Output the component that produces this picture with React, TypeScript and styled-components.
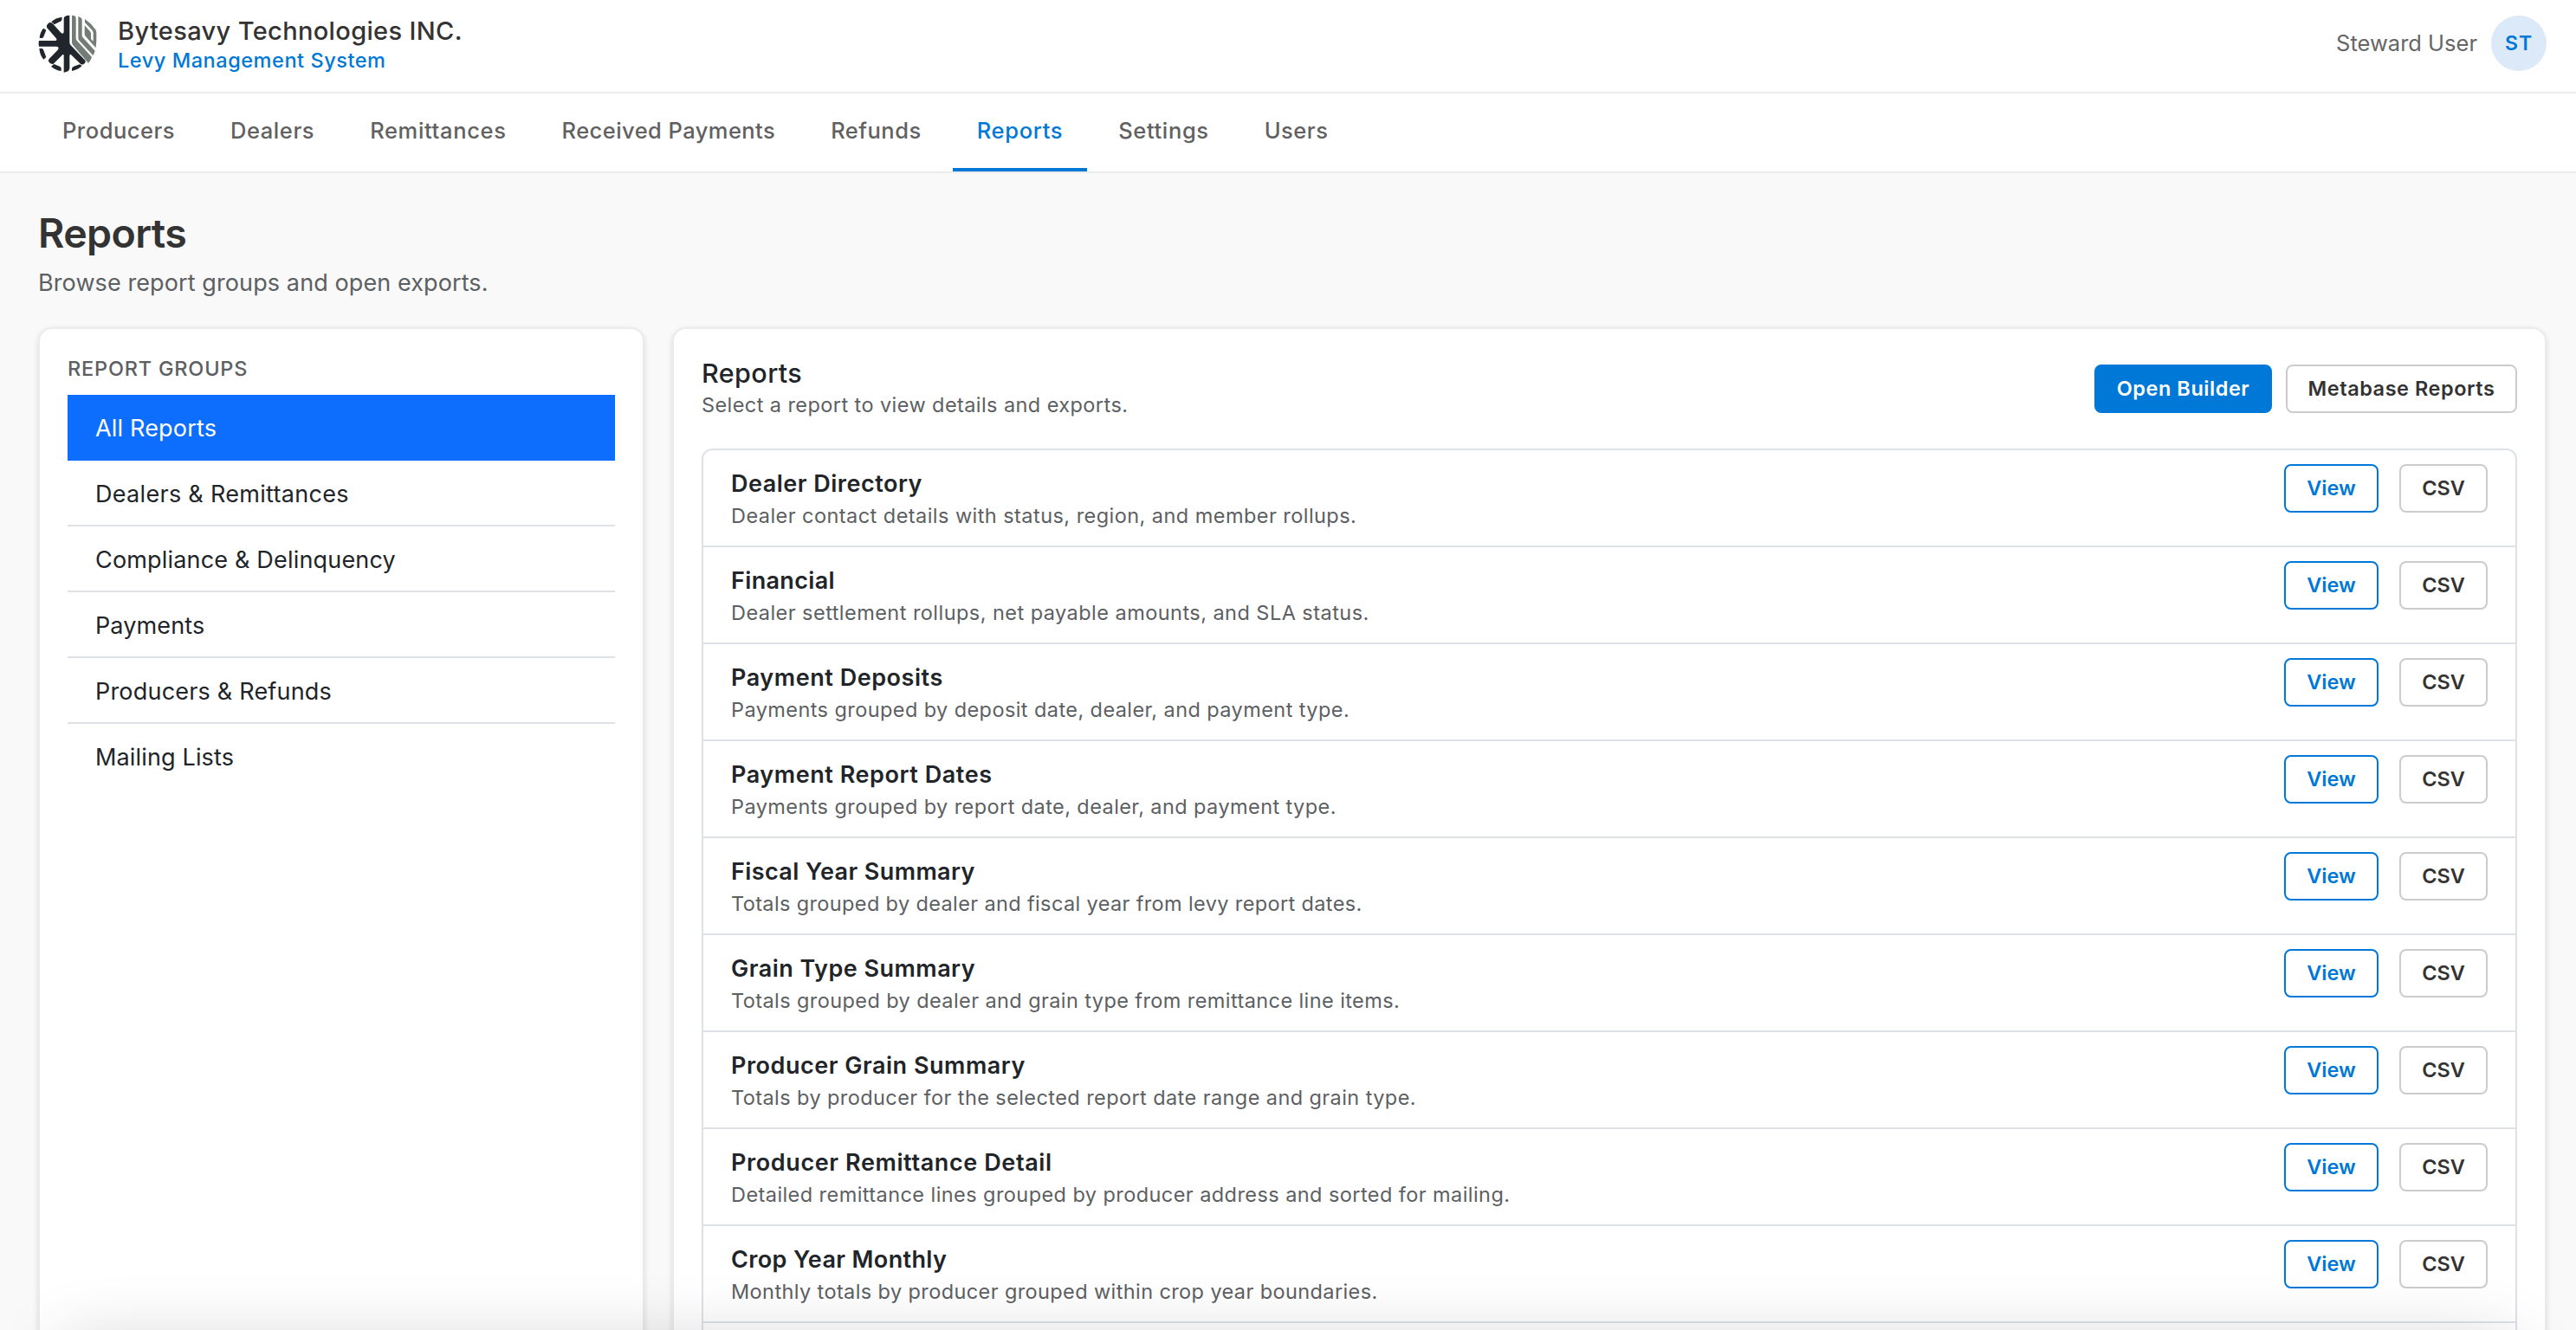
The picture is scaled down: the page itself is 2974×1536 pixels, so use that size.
import React from 'react';
import styled, { createGlobalStyle, css } from 'styled-components';

const GlobalStyle = createGlobalStyle`
  *, *::before, *::after { box-sizing: border-box; }
  html, body { margin: 0; padding: 0; }
  body {
    background: #f9f9f9;
    color: #212529;
    font-family: Inter, 'Noto Sans', sans-serif;
    overflow: hidden;
  }
`;

const Page = styled.div`
  position: relative;
  display: flex;
  flex-direction: column;
  height: 1536px;
  overflow: hidden;
`;

const Header = styled.header`
  display: flex;
  justify-content: space-between;
  align-items: flex-start;
  height: 108px;
  padding: 17px 34px 0 44px;
  background: #fff;
  border-bottom: 2px solid #ebebeb;
  flex: none;
`;

const Brand = styled.div`
  display: flex;
  gap: 24px;
`;

const BrandText = styled.div`
  padding-top: 1px;
`;

const BrandName = styled.div`
  font-size: 29px;
  line-height: 35px;
  font-weight: 500;
  letter-spacing: 0.35px;
  color: #333;
`;

const BrandProduct = styled.div`
  font-size: 23.5px;
  line-height: 33px;
  font-weight: 500;
  letter-spacing: 0.55px;
  color: #0078d7;
`;

const User = styled.div`
  display: flex;
  align-items: center;
  gap: 16px;
  padding-top: 1px;
`;

const UserName = styled.span`
  font-size: 25.5px;
  line-height: 31px;
  padding-bottom: 1px;
  color: #666;
`;

const Avatar = styled.div`
  display: flex;
  align-items: center;
  justify-content: center;
  width: 64px;
  height: 64px;
  border-radius: 50%;
  background: #dbe9f8;
  color: #0078d7;
  font-size: 23px;
  line-height: 28px;
  font-weight: 600;
  letter-spacing: 1px;
`;

const Nav = styled.nav`
  display: flex;
  gap: 8px;
  height: 92px;
  padding: 0 44px;
  background: #fff;
  border-bottom: 2px solid #ebebeb;
  flex: none;
`;

const Tab = styled.a<{ $active?: boolean; $tracking: number }>`
  padding: 27px 28px 28px;
  font-size: 25.5px;
  line-height: 31px;
  font-weight: 500;
  letter-spacing: ${(p) => p.$tracking}px;
  color: ${(p) => (p.$active ? '#0078d7' : '#616161')};
  border-bottom: 4px solid ${(p) => (p.$active ? '#0078d7' : 'transparent')};
`;

const Main = styled.main`
  display: flex;
  flex-direction: column;
  flex: 1;
  padding: 41px 34px 0 44px;
`;

const PageTitle = styled.h1`
  margin: 0 0 13px;
  font-size: 46.5px;
  line-height: 56px;
  font-weight: 600;
  letter-spacing: -0.6px;
  color: #333;
`;

const PageIntro = styled.p`
  margin: 0 0 35px;
  font-size: 27px;
  line-height: 33px;
  letter-spacing: 0.1px;
  color: #5c6063;
`;

const Columns = styled.div`
  display: grid;
  grid-template-columns: 700px 1fr;
  gap: 32px;
  flex: 1;
`;

const Panel = styled.section`
  height: 1400px;
  padding: 31px 32px 32px;
  background: #fff;
  border: 2px solid #ebebeb;
  border-radius: 16px;
  box-shadow: 0 2px 6px rgba(0, 0, 0, 0.12);
`;

const GroupsTitle = styled.h2`
  margin: 0 0 16px;
  font-size: 23.5px;
  line-height: 29px;
  font-weight: 500;
  letter-spacing: 0.8px;
  color: #5c6063;
`;

const Group = styled.a<{ $active?: boolean; $tracking: number }>`
  display: block;
  height: 76px;
  padding: 22px 32px 0;
  font-size: 27px;
  line-height: 33px;
  letter-spacing: ${(p) => p.$tracking}px;
  color: #212529;
  border-bottom: 2px solid #dee2e6;
  &:last-child { border-bottom: 0; }
  ${(p) =>
    p.$active &&
    css`
      background: #0d6efd;
      border-color: #0d6efd;
      color: #fff;
    `}
`;

const ListHeader = styled.div`
  display: flex;
  justify-content: space-between;
  align-items: flex-start;
  margin: 1px 0 36px;
`;

const ListTitle = styled.h2`
  margin: 0 0 4px;
  font-size: 30.5px;
  line-height: 37px;
  font-weight: 500;
  letter-spacing: 0.4px;
`;

const Muted = styled.p<{ $tracking?: number }>`
  margin: 0;
  font-size: 23.5px;
  line-height: 29px;
  letter-spacing: ${(p) => p.$tracking ?? 0.42}px;
  color: #5c6063;
`;

const Actions = styled.div<{ $gap: number; $top?: number }>`
  display: flex;
  gap: ${(p) => p.$gap}px;
  margin-top: ${(p) => p.$top ?? 0}px;
`;

const variants = {
  primary: css`
    background: #0078d7;
    border-color: #0078d7;
    color: #fff;
  `,
  outline: css`
    background: transparent;
    border-color: #0078d7;
    color: #0078d7;
  `,
  neutral: css`
    background: transparent;
    border-color: #ccc;
    color: #333;
  `,
};

const Button = styled.button<{ $variant: keyof typeof variants; $width: number }>`
  width: ${(p) => p.$width}px;
  height: 56px;
  padding: 11px 0 12px;
  border: 2px solid;
  border-radius: 8px;
  font-family: inherit;
  font-size: 23.5px;
  line-height: 29px;
  font-weight: 600;
  letter-spacing: ${(p) => (p.$width > 150 ? 0.54 : 0)}px;
  white-space: nowrap;
  ${(p) => variants[p.$variant]}
`;

const ReportList = styled.div`
  border: 2px solid #dee2e6;
  border-radius: 12px;
`;

const ReportRow = styled.article`
  display: flex;
  justify-content: space-between;
  align-items: flex-start;
  height: 112px;
  padding: 16px 32px 0;
  border-bottom: 2px solid #dee2e6;
`;

const ReportText = styled.div`
  padding-top: 6px;
`;

const ReportName = styled.h3<{ $tracking: number }>`
  margin: 0 0 6px;
  font-size: 27px;
  line-height: 33px;
  font-weight: 600;
  letter-spacing: ${(p) => p.$tracking}px;
`;

/* Soft shade cast upward from below the viewport */
const BottomShade = styled.div`
  position: absolute;
  left: 70px;
  right: 70px;
  top: 1550px;
  height: 160px;
  border-radius: 20px;
  box-shadow: 0 0 80px rgba(0, 0, 0, 0.18);
  pointer-events: none;
`;

const Logo = () => (
  <svg width="68" height="67" viewBox="42 36 204 201" aria-hidden="true">
    <g fill="#20262c">
      <path d="M131 48 Q132 39 151 38 V132 Q151 138 155 142 L205 194 Q209 200 200 207 Q193 211 187 205 L158 176 Q151 170 151 179 V222 Q150 234 131 236 V178 Q131 170 125 176 L95 206 Q90 210 80 201 Q75 195 80 189 L110 158 Q117 148 106 146 H45 Q42 136 45 126 H101 Q110 125 104 117 L72 80 Q70 71 80 64 Q86 61 91 65 L121 98 Q131 106 131 94 Z" />
      <path d="M60 83 L70 89 L60 115 Q56 119 47 116 Q48 98 60 83 Z" />
      <path d="M88 60 Q102 47 125 44 L124 55 Q122 59 116 61 L98 70 Z" />
      <path d="M46 153 H55 Q59 154 60 157 L70 183 L61 191 Q48 176 46 153 Z" />
      <path d="M87 215 L97 207 L117 215 Q122 217 122 222 V231 Q102 228 87 215 Z" />
      <path d="M159 231 V222 Q160 217 165 215 L186 208 L194 213 Q180 227 159 231 Z" />
    </g>
    <g fill="#737c76">
      <path d="M159 38 L166 39 Q173 41 173 48 V118 Q173 122 176 125 L228 183 Q224 195 216 204 L163 142 Q159 138 159 132 Z" />
      <path d="M181 42 L188 45 Q194 48 194 54 V108 Q194 112 197 115 L239 161 Q236 172 232 177 L184 125 Q181 121 181 116 Z" />
      <path fillRule="evenodd" d="M204 51 Q226 66 241 88 Q244 94 244 100 Q245 128 242 151 L207 112 Q203 107 203 101 V73 L222 94 Q225 98 225 102 V120 L233 128 V100 Q233 94 229 89 L204 63 Z" />
    </g>
  </svg>
);

const tabs: [string, number][] = [
  ['Producers', 0.5],
  ['Dealers', 0.57],
  ['Remittances', 0.65],
  ['Received Payments', 0.44],
  ['Refunds', 0.5],
  ['Reports', 0.67],
  ['Settings', 0.64],
  ['Users', 0.5],
];

const groups: [string, number][] = [
  ['All Reports', 0.18],
  ['Dealers & Remittances', 0.3],
  ['Compliance & Delinquency', 0.18],
  ['Payments', 0.12],
  ['Producers & Refunds', 0.2],
  ['Mailing Lists', 0.15],
];

const reports: [string, number, string, number][] = [
  ['Dealer Directory', 0.5, 'Dealer contact details with status, region, and member rollups.', 0.45],
  ['Financial', 0.35, 'Dealer settlement rollups, net payable amounts, and SLA status.', 0.455],
  ['Payment Deposits', 0.55, 'Payments grouped by deposit date, dealer, and payment type.', 0.415],
  ['Payment Report Dates', 0.56, 'Payments grouped by report date, dealer, and payment type.', 0.415],
  ['Fiscal Year Summary', 0.4, 'Totals grouped by dealer and fiscal year from levy report dates.', 0.37],
  ['Grain Type Summary', 0.48, 'Totals grouped by dealer and grain type from remittance line items.', 0.41],
  ['Producer Grain Summary', 0.52, 'Totals by producer for the selected report date range and grain type.', 0.415],
  ['Producer Remittance Detail', 0.61, 'Detailed remittance lines grouped by producer address and sorted for mailing.', 0.43],
  ['Crop Year Monthly', 0.36, 'Monthly totals by producer grouped within crop year boundaries.', 0.395],
];

export default function App() {
  return (
    <Page>
      <GlobalStyle />
      <Header>
        <Brand>
          <Logo />
          <BrandText>
            <BrandName>Bytesavy Technologies INC.</BrandName>
            <BrandProduct>Levy Management System</BrandProduct>
          </BrandText>
        </Brand>
        <User>
          <UserName>Steward User</UserName>
          <Avatar>ST</Avatar>
        </User>
      </Header>
      <Nav>
        {tabs.map(([tab, tracking]) => (
          <Tab key={tab} $active={tab === 'Reports'} $tracking={tracking}>
            {tab}
          </Tab>
        ))}
      </Nav>
      <Main>
        <PageTitle>Reports</PageTitle>
        <PageIntro>Browse report groups and open exports.</PageIntro>
        <Columns>
          <Panel>
            <GroupsTitle>REPORT GROUPS</GroupsTitle>
            <div>
              {groups.map(([group, tracking], i) => (
                <Group key={group} $active={i === 0} $tracking={tracking}>
                  {group}
                </Group>
              ))}
            </div>
          </Panel>
          <Panel>
            <ListHeader>
              <div>
                <ListTitle>Reports</ListTitle>
                <Muted>Select a report to view details and exports.</Muted>
              </div>
              <Actions $gap={16} $top={9}>
                <Button $variant="primary" $width={205}>Open Builder</Button>
                <Button $variant="neutral" $width={267}>Metabase Reports</Button>
              </Actions>
            </ListHeader>
            <ReportList>
              {reports.map(([name, nameTracking, description, tracking]) => (
                <ReportRow key={name}>
                  <ReportText>
                    <ReportName $tracking={nameTracking}>{name}</ReportName>
                    <Muted $tracking={tracking}>{description}</Muted>
                  </ReportText>
                  <Actions $gap={24}>
                    <Button $variant="outline" $width={109}>View</Button>
                    <Button $variant="neutral" $width={102}>CSV</Button>
                  </Actions>
                </ReportRow>
              ))}
              <ReportRow />
            </ReportList>
          </Panel>
        </Columns>
      </Main>
      <BottomShade />
    </Page>
  );
}
